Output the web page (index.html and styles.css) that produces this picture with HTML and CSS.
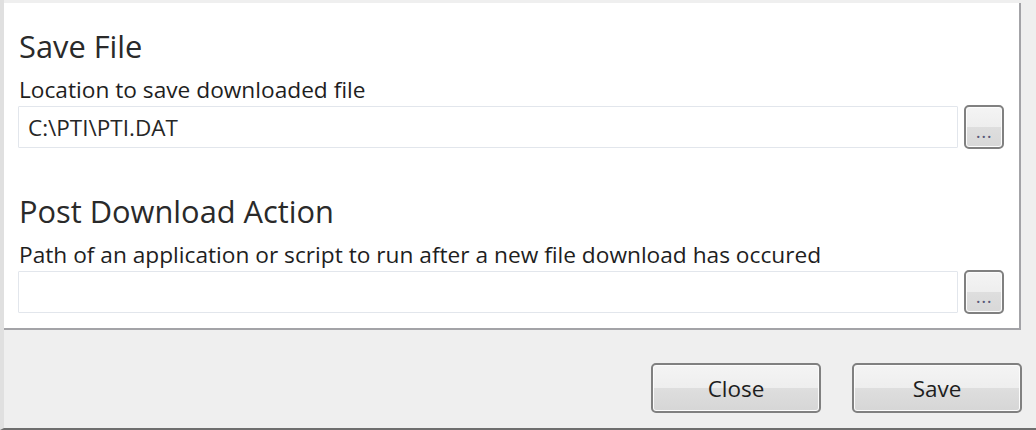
FILE: index.html
```html
<!DOCTYPE html>
<html lang="en">
<head>
    <meta charset="UTF-8">
    <meta name="viewport" content="width=device-width, initial-scale=1.0">
    <title>Download Settings</title>
    <link rel="stylesheet" href="styles.css">
</head>
<body>
    <div class="window">
        <div class="panel">
            <div class="section">
                <h2>Save File</h2>
                <label for="save_path">Location to save downloaded file</label>
                <div class="path-row">
                    <input id="save_path" class="path-box" type="text" value="C:\PTI\PTI.DAT">
                    <button class="browse"><span class="dots">...</span></button>
                </div>
            </div>

            <div class="section second">
                <h2>Post Download Action</h2>
                <label for="post_action">Path of an application or script to run after a new file download has occured</label>
                <div class="path-row">
                    <input id="post_action" class="path-box" type="text" value="">
                    <button class="browse"><span class="dots">...</span></button>
                </div>
            </div>
        </div>

        <div class="footer">
            <button class="action">Close</button>
            <button class="action">Save</button>
        </div>
    </div>
</body>
</html>
```

FILE: styles.css
```css
body {
    margin: 0;
    padding: 0;
    background-color: #efefef;
    font-family: "Open Sans", "Noto Sans", sans-serif;
    color: #1e1e1e;
}
.window {
    height: 430px;
    border-left: 4px solid #e0e0e0;
    border-bottom: 2px solid #6e6e6e;
    padding-top: 3px;
    box-sizing: border-box;
    display: flex;
    flex-direction: column;
}
.panel {
    width: 1017px;
    height: 327px;
    box-sizing: border-box;
    background-color: #ffffff;
    border-right: 2px solid #a3a3a7;
    border-bottom: 2px solid #a3a3a7;
    padding: 23px 15px 0 14px;
}
.section h2 {
    margin: 0 0 0 1px;
    font-size: 30.8px;
    font-weight: normal;
    line-height: 40px;
    color: #2a2a2a;
}
.section label {
    display: block;
    margin: 10px 0 0 1px;
    font-size: 22.7px;
    line-height: 28px;
}
.second {
    margin-top: 42px;
}
.path-row {
    display: flex;
    gap: 6px;
    margin-top: 2px;
}
.path-box {
    flex: 1;
    height: 42px;
    box-sizing: border-box;
    border: 1px solid #e2e6ec;
    border-radius: 1px;
    padding: 0 9px;
    font-family: inherit;
    font-size: 22.5px;
    color: #262626;
    outline: none;
}
.browse {
    width: 40px;
    height: 44px;
    margin-top: -1px;
    box-sizing: border-box;
    border: 2px solid #808080;
    border-radius: 5px;
    background: linear-gradient(#f4f4f4 0%, #eeeeee 50%, #dedede 51%, #d8d8d8 100%);
    box-shadow: inset 0 0 0 1px #fcfcfc;
    padding: 0 0 10px 0;
    display: flex;
    justify-content: center;
    align-items: flex-end;
}
.dots {
    font-family: "Open Sans", sans-serif;
    font-size: 19px;
    line-height: 12px;
    color: #585878;
    letter-spacing: 0.5px;
}
.footer {
    flex: 1;
    display: flex;
    justify-content: flex-end;
    align-items: flex-start;
    gap: 31px;
    padding: 33px 14px 0 0;
}
.action {
    width: 170px;
    height: 50px;
    border: 2px solid #808080;
    border-radius: 5px;
    background: linear-gradient(#f4f4f4 0%, #eeeeee 50%, #dedede 51%, #d6d6d6 100%);
    box-shadow: inset 0 0 0 1px #fcfcfc;
    font-family: inherit;
    font-size: 22.5px;
    color: #1e1e1e;
    padding: 0;
}
```
